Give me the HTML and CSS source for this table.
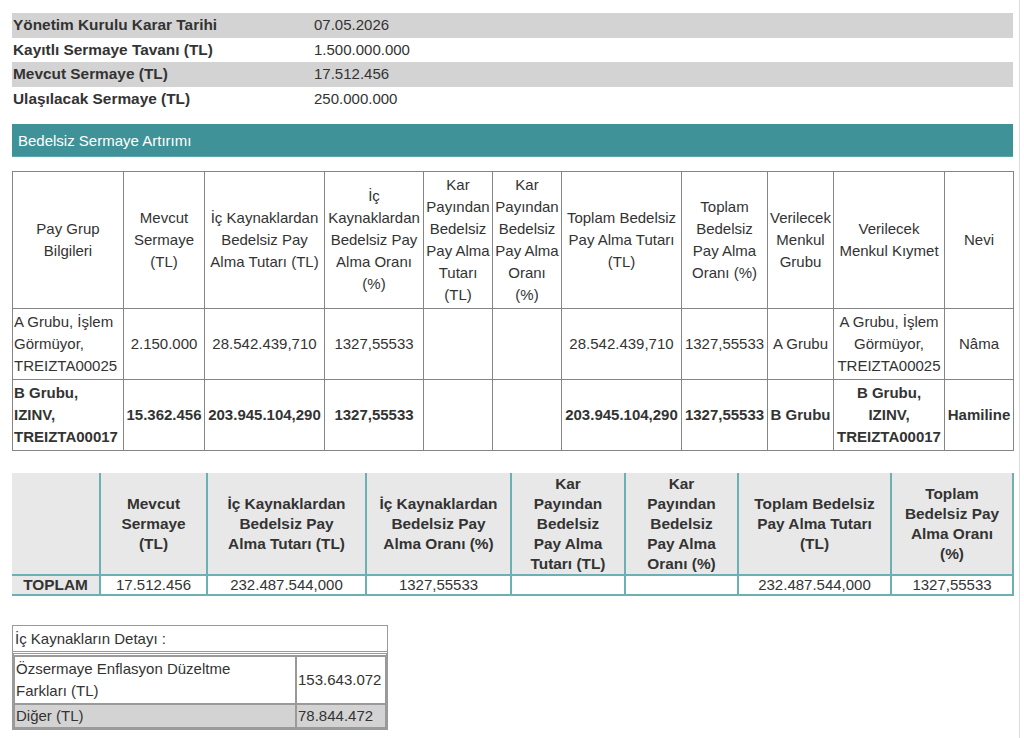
FILE: index.html
```html
<!DOCTYPE html>
<html lang="tr">
<head>
<meta charset="utf-8">
<title>Bedelsiz Sermaye Artırımı</title>
<link rel="stylesheet" href="styles.css">
</head>
<body>
<div class="page">
  <table class="info">
    <tr class="shaded"><th>Yönetim Kurulu Karar Tarihi</th><td>07.05.2026</td></tr>
    <tr><th>Kayıtlı Sermaye Tavanı (TL)</th><td>1.500.000.000</td></tr>
    <tr class="shaded"><th>Mevcut Sermaye (TL)</th><td>17.512.456</td></tr>
    <tr><th>Ulaşılacak Sermaye (TL)</th><td>250.000.000</td></tr>
  </table>

  <div class="section-bar">Bedelsiz Sermaye Artırımı</div>

  <table class="groups">
    <colgroup>
      <col style="width:111px"><col style="width:81px"><col style="width:120px"><col style="width:99px">
      <col style="width:69px"><col style="width:69px"><col style="width:120px"><col style="width:86px">
      <col style="width:66px"><col style="width:111px"><col style="width:69px">
    </colgroup>
    <tr class="head">
      <td>Pay Grup<br>Bilgileri</td>
      <td>Mevcut<br>Sermaye<br>(TL)</td>
      <td>İç Kaynaklardan<br>Bedelsiz Pay<br>Alma Tutarı (TL)</td>
      <td>İç<br>Kaynaklardan<br>Bedelsiz Pay<br>Alma Oranı<br>(%)</td>
      <td>Kar<br>Payından<br>Bedelsiz<br>Pay Alma<br>Tutarı<br>(TL)</td>
      <td>Kar<br>Payından<br>Bedelsiz<br>Pay Alma<br>Oranı<br>(%)</td>
      <td>Toplam Bedelsiz<br>Pay Alma Tutarı<br>(TL)</td>
      <td>Toplam<br>Bedelsiz<br>Pay Alma<br>Oranı (%)</td>
      <td>Verilecek<br>Menkul<br>Grubu</td>
      <td>Verilecek<br>Menkul Kıymet</td>
      <td>Nevi</td>
    </tr>
    <tr>
      <td class="left">A Grubu, İşlem<br>Görmüyor,<br>TREIZTA00025</td>
      <td>2.150.000</td>
      <td>28.542.439,710</td>
      <td>1327,55533</td>
      <td></td>
      <td></td>
      <td>28.542.439,710</td>
      <td>1327,55533</td>
      <td>A Grubu</td>
      <td>A Grubu, İşlem<br>Görmüyor,<br>TREIZTA00025</td>
      <td>Nâma</td>
    </tr>
    <tr class="strong">
      <td class="left">B Grubu,<br>IZINV,<br>TREIZTA00017</td>
      <td>15.362.456</td>
      <td>203.945.104,290</td>
      <td>1327,55533</td>
      <td></td>
      <td></td>
      <td>203.945.104,290</td>
      <td>1327,55533</td>
      <td>B Grubu</td>
      <td>B Grubu,<br>IZINV,<br>TREIZTA00017</td>
      <td>Hamiline</td>
    </tr>
  </table>

  <table class="totals">
    <colgroup>
      <col style="width:88px"><col style="width:107px"><col style="width:159px"><col style="width:145px">
      <col style="width:114px"><col style="width:113px"><col style="width:153px"><col style="width:122px">
    </colgroup>
    <tr class="head">
      <th class="first"></th>
      <th>Mevcut<br>Sermaye<br>(TL)</th>
      <th>İç Kaynaklardan<br>Bedelsiz Pay<br>Alma Tutarı (TL)</th>
      <th>İç Kaynaklardan<br>Bedelsiz Pay<br>Alma Oranı (%)</th>
      <th>Kar<br>Payından<br>Bedelsiz<br>Pay Alma<br>Tutarı (TL)</th>
      <th>Kar<br>Payından<br>Bedelsiz<br>Pay Alma<br>Oranı (%)</th>
      <th>Toplam Bedelsiz<br>Pay Alma Tutarı<br>(TL)</th>
      <th>Toplam<br>Bedelsiz Pay<br>Alma Oranı<br>(%)</th>
    </tr>
    <tr class="row">
      <th class="first">TOPLAM</th>
      <td>17.512.456</td>
      <td>232.487.544,000</td>
      <td>1327,55533</td>
      <td></td>
      <td></td>
      <td>232.487.544,000</td>
      <td>1327,55533</td>
    </tr>
  </table>

  <div class="detail">
    <div class="detail-title">İç Kaynakların Detayı :</div>
    <table class="detail-table">
      <tr>
        <td class="name">Özsermaye Enflasyon Düzeltme<br>Farkları (TL)</td>
        <td class="val">153.643.072</td>
      </tr>
      <tr class="shaded">
        <td class="name">Diğer (TL)</td>
        <td class="val">78.844.472</td>
      </tr>
    </table>
  </div>
</div>
</body>
</html>
```

FILE: styles.css
```css
html, body {
  margin: 0;
  padding: 0;
  background: #ffffff;
}

body {
  font-family: "Liberation Sans", Arial, sans-serif;
  font-size: 15px;
  color: #333333;
}

.page {
  box-sizing: border-box;
  width: 1020px;
  min-height: 738px;
  padding: 13px 6px 0 12px;
  border-right: 1px solid #dcdcdc;
}

/* ---------- top info ---------- */
.info {
  width: 1001px;
  border-collapse: collapse;
}

.info th,
.info td {
  height: 24.5px;
  padding: 0 1px;
  text-align: left;
  vertical-align: middle;
  line-height: 18px;
}

.info th {
  width: 299px;
  font-weight: bold;
  font-size: 15.4px;
}

.info td {
  padding-left: 1px;
}

.info .shaded th,
.info .shaded td {
  background: #d3d3d3;
}

/* ---------- section bar ---------- */
.section-bar {
  margin-top: 13px;
  height: 33px;
  line-height: 33px;
  padding-left: 6px;
  background: #3f9297;
  color: #ffffff;
  border-bottom: 1px solid #5aa5a9;
  box-sizing: border-box;
}

/* ---------- groups table ---------- */
.groups {
  margin-top: 14px;
  width: 1002px;
  table-layout: fixed;
  border-collapse: collapse;
  border: 1px solid #858585;
}

.groups td {
  border: 1px solid #858585;
  padding: 2px 1px;
  line-height: 22px;
  text-align: center;
  vertical-align: middle;
  white-space: nowrap;
  overflow: hidden;
}

.groups td.left {
  text-align: left;
}

.groups .strong td {
  font-weight: bold;
}

/* ---------- totals table ---------- */
.totals {
  margin-top: 22px;
  width: 1002px;
  table-layout: fixed;
  border-collapse: collapse;
}

.totals th,
.totals td {
  padding: 0 1px;
  line-height: 20px;
  text-align: center;
  vertical-align: middle;
  white-space: nowrap;
  border-right: 2px solid #6cb0b4;
}

.totals th {
  font-size: 15.4px;
}

.totals .head th {
  height: 101px;
  background: #e8e8e8;
  font-weight: bold;
  border-bottom: 2px solid #6cb0b4;
}

.totals .row th,
.totals .row td {
  height: 18px;
  line-height: 18px;
  border-bottom: 2px solid #6cb0b4;
}

.totals .row th.first {
  background: #e8e8e8;
  font-weight: bold;
}

/* ---------- detail ---------- */
.detail {
  margin-top: 29px;
  width: 376px;
  border: 1px solid #9a9a9a;
  box-sizing: border-box;
}

.detail-title {
  height: 25px;
  line-height: 25px;
  padding-left: 2px;
  border-bottom: 1px solid #9a9a9a;
}

.detail-table {
  width: 374px;
  margin-top: 1px;
  border-collapse: separate;
  border-spacing: 0;
  border: 1px solid #9a9a9a;
  border-top: 3px double #9a9a9a;
}

.detail-table td {
  border: 1px solid #9a9a9a;
  padding: 0 1px;
  line-height: 22px;
  vertical-align: middle;
  text-align: left;
}

.detail-table td.name {
  width: 278px;
}

.detail-table tr:first-child td {
  height: 46px;
}

.detail-table .shaded td {
  height: 22px;
  background: #d3d3d3;
}
```
